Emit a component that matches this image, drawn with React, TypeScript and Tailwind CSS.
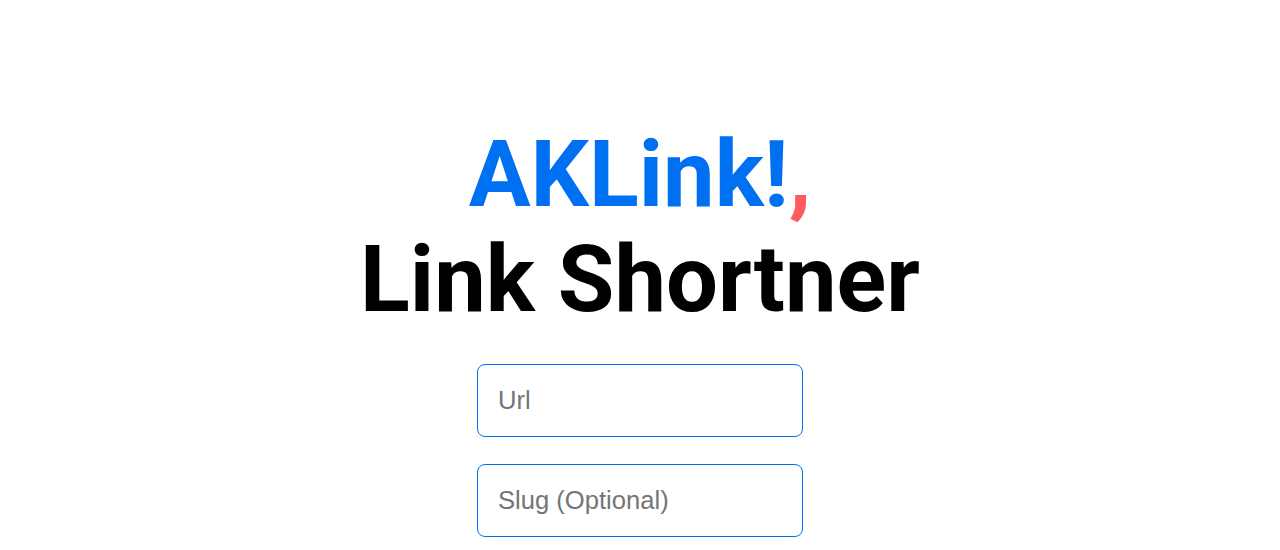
export default function App() {
  return (
    <main className="flex min-h-[550px] flex-col items-center bg-white pt-[122px]">
      <h1 className="text-center font-['Roboto',sans-serif] text-[92px] font-bold leading-[105px] text-black">
        <span className="text-[#0070f3]">AKLink!</span>
        <span className="text-[#ff5a5f]">,</span>
        <br />
        Link Shortner
      </h1>
      <form className="mt-[32px] flex flex-col gap-[27px]">
        <input
          type="text"
          placeholder="Url"
          className="h-[73px] w-[326px] rounded-lg border border-[#0070f3] px-5 font-['Liberation_Sans',Arial,sans-serif] text-[25.6px] text-black outline-none placeholder:text-[#757575]"
        />
        <input
          type="text"
          placeholder="Slug (Optional)"
          className="h-[73px] w-[326px] rounded-lg border border-[#0070f3] px-5 font-['Liberation_Sans',Arial,sans-serif] text-[25.6px] text-black outline-none placeholder:text-[#757575]"
        />
      </form>
    </main>
  );
}
